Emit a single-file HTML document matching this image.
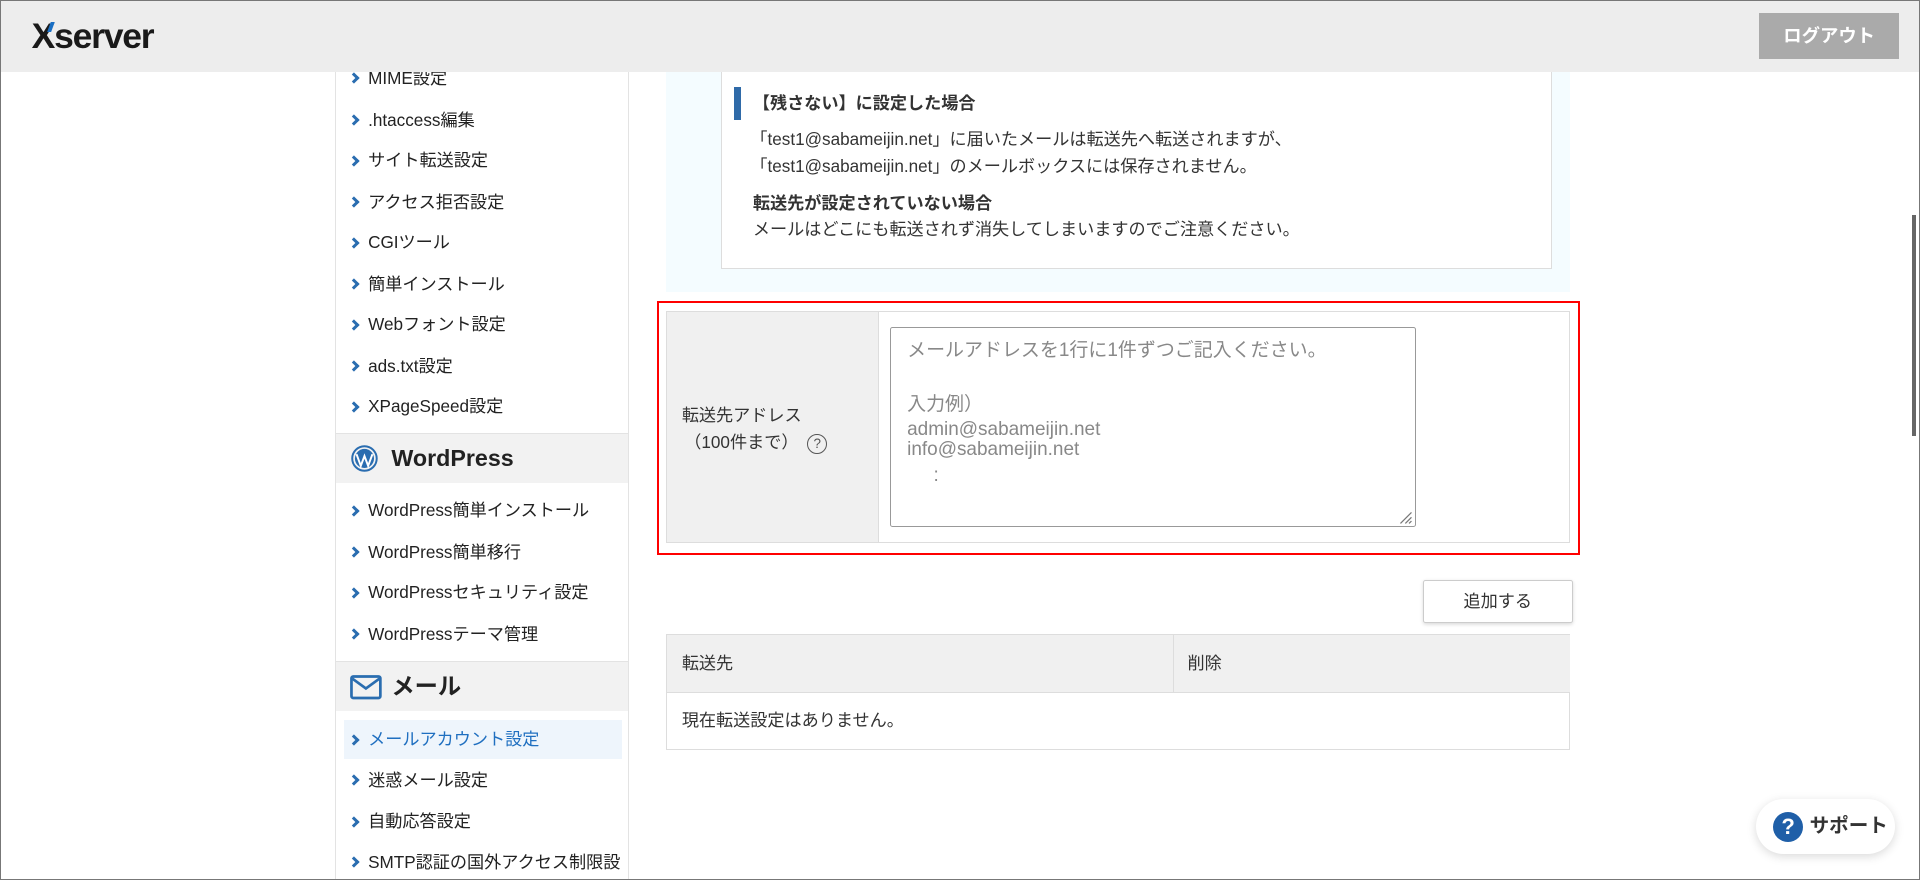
<!DOCTYPE html>
<html><head><meta charset="utf-8"><style>
html,body{margin:0;padding:0;background:#fff;overflow:hidden}
body{width:1920px;height:880px}
#w{position:relative;width:1566px;height:717px;zoom:1.22449;border:1px solid #777;overflow:hidden;font-family:"Liberation Sans","Noto Sans CJK JP",sans-serif;color:#333;font-size:14px}
.a{position:absolute;white-space:nowrap}
#hd{left:0;top:0;width:1566px;height:58px;background:#ededed;z-index:5}
.logo{left:25px;top:12px;font-size:29px;font-weight:bold;color:#1a1a1a;letter-spacing:-1px;z-index:6;line-height:34px}
.out{left:1436px;top:10px;width:114px;height:37px;background:#aaa;color:#fff;font-weight:bold;font-size:15px;text-align:center;line-height:37px;z-index:6}
#sb{left:273px;top:58px;width:238px;height:662px;border-left:1px solid #e3e3e3;border-right:1px solid #e3e3e3}
.it{left:26px;font-size:14px;color:#222;line-height:18px}
.chev{position:absolute;left:-15px;top:6px;width:4px;height:4px;border-right:2.5px solid #2a6db0;border-top:2.5px solid #2a6db0;transform:rotate(45deg)}
.sec{left:0;width:238px;height:40px;background:#f2f2f2;border-top:1px solid #e3e3e3}
.sec span{position:absolute;left:45px;top:7px;font-size:19px;font-weight:bold;color:#222;line-height:26px}
.q{display:inline-block;width:15px;height:15px;border:1px solid #555;border-radius:50%;font-size:11px;text-align:center;line-height:15px;color:#555}
.ph{left:740px;font-size:15.5px;color:#888;line-height:18px}
</style></head><body><div id="w">
<div class="a" id="hd"></div>
<div class="a logo">X<span style="position:absolute;left:14px;top:5px;width:3px;height:8px;background:#1a6fc4;transform:skewX(-20deg)"></span>server</div>
<div class="a out">ログアウト</div>
<div style="position:absolute;left:1561px;top:175px;width:3px;height:180px;background:#666"></div>

<div class="a" id="sb">
<div class="a it" style="top:-4px"><i class="chev"></i>MIME設定</div>
<div class="a it" style="top:30px"><i class="chev"></i>.htaccess編集</div>
<div class="a it" style="top:63px"><i class="chev"></i>サイト転送設定</div>
<div class="a it" style="top:97px"><i class="chev"></i>アクセス拒否設定</div>
<div class="a it" style="top:130px"><i class="chev"></i>CGIツール</div>
<div class="a it" style="top:164px"><i class="chev"></i>簡単インストール</div>
<div class="a it" style="top:197px"><i class="chev"></i>Webフォント設定</div>
<div class="a it" style="top:231px"><i class="chev"></i>ads.txt設定</div>
<div class="a it" style="top:264px"><i class="chev"></i>XPageSpeed設定</div>
<div class="a sec" style="top:295px"><svg style="position:absolute;left:12px;top:9px" width="22" height="22" viewBox="0 0 22 22"><circle cx="11" cy="11" r="10" fill="none" stroke="#2a6db0" stroke-width="1.6"/><circle cx="11" cy="11" r="7.8" fill="#2a6db0"/><path d="M4.5 7.5 L8 17 L11 9 L14 17 L17.5 7.5" fill="none" stroke="#fff" stroke-width="1.6"/></svg><span>WordPress</span></div>
<div class="a it" style="top:349px"><i class="chev"></i>WordPress簡単インストール</div>
<div class="a it" style="top:383px"><i class="chev"></i>WordPress簡単移行</div>
<div class="a it" style="top:416px"><i class="chev"></i>WordPressセキュリティ設定</div>
<div class="a it" style="top:450px"><i class="chev"></i>WordPressテーマ管理</div>
<div class="a sec" style="top:481px"><svg style="position:absolute;left:11px;top:11px" width="26" height="20" viewBox="0 0 26 20"><rect x="1.2" y="1.2" width="23.6" height="17.6" rx="1.5" fill="none" stroke="#2a6db0" stroke-width="2.2"/><path d="M2 3 L13 11 L24 3" fill="none" stroke="#2a6db0" stroke-width="2.2"/></svg><span>メール</span></div>
<div class="a" style="left:6px;top:529px;width:227px;height:32px;background:#eef5fc"></div>
<div class="a it" style="top:536px;color:#1f6fc0"><i class="chev"></i>メールアカウント設定</div>
<div class="a it" style="top:569px"><i class="chev"></i>迷惑メール設定</div>
<div class="a it" style="top:603px"><i class="chev"></i>自動応答設定</div>
<div class="a it" style="top:636px"><i class="chev"></i>SMTP認証の国外アクセス制限設</div>
</div>

<div class="a" style="left:543px;top:58px;width:738px;height:180px;background:#f4fcff"></div>
<div class="a" style="left:588px;top:50px;width:677px;height:167px;background:#fff;border:1px solid #ddd"></div>
<div class="a" style="left:599px;top:70px;width:5px;height:27px;background:#2f6aa8"></div>
<div class="a" style="left:614px;top:74px;font-weight:bold;font-size:14px;line-height:18px">【残さない】に設定した場合</div>
<div class="a" style="left:612px;top:104px;font-size:14px;line-height:18px">「test1@sabameijin.net」に届いたメールは転送先へ転送されますが、</div>
<div class="a" style="left:612px;top:126px;font-size:14px;line-height:18px">「test1@sabameijin.net」のメールボックスには保存されません。</div>
<div class="a" style="left:614px;top:156px;font-weight:bold;font-size:14px;line-height:18px">転送先が設定されていない場合</div>
<div class="a" style="left:614px;top:177px;font-size:14px;line-height:18px">メールはどこにも転送されず消失してしまいますのでご注意ください。</div>

<div class="a" style="left:536px;top:245px;width:750px;height:204px;border:2px solid #f00"></div>
<div class="a" style="left:543px;top:253px;width:737px;height:188px;border:1px solid #ddd;background:#fff"></div>
<div class="a" style="left:544px;top:254px;width:172px;height:188px;background:#f0f0f0;border-right:1px solid #ddd"></div>
<div class="a" style="left:556px;top:329px;font-size:14px;line-height:18px">転送先アドレス</div>
<div class="a" style="left:558px;top:351px;font-size:14px;line-height:18px">（100件まで）　<span class="q">?</span></div>
<div class="a" style="left:726px;top:266px;width:428px;height:162px;border:1px solid #999;border-radius:2px;background:#fff"></div>
<div class="a ph" style="top:277px">メールアドレスを1行に1件ずつご記入ください。</div>
<div class="a ph" style="top:321px">入力例）</div>
<div class="a ph" style="top:341px">admin@sabameijin.net</div>
<div class="a ph" style="top:358px">info@sabameijin.net</div>
<div class="a ph" style="top:379px">&nbsp;&nbsp;&nbsp;&nbsp;&nbsp;:</div>
<svg class="a" style="left:1141px;top:416px" width="12" height="12"><path d="M11 2 L2 11 M11 6 L6 11 M11 9 L9 11" stroke="#777" stroke-width="1"/></svg>

<div class="a" style="left:1161px;top:473px;width:121px;height:33px;border:1px solid #ccc;border-radius:2px;background:#fff;box-shadow:0 1px 3px rgba(0,0,0,.15);text-align:center;line-height:33px;font-size:14px">追加する</div>

<div class="a" style="left:543px;top:517px;width:737px;height:93px;border:1px solid #ddd"></div>
<div class="a" style="left:544px;top:518px;width:737px;height:46px;background:#f0f0f0;border-bottom:1px solid #ddd"></div>
<div class="a" style="left:957px;top:518px;width:1px;height:46px;background:#ddd"></div>
<div class="a" style="left:556px;top:532px;font-size:14px;line-height:18px">転送先</div>
<div class="a" style="left:969px;top:532px;font-size:14px;line-height:18px">削除</div>
<div class="a" style="left:556px;top:578px;font-size:14px;line-height:18px">現在転送設定はありません。</div>

<div class="a" style="left:1433px;top:652px;width:114px;height:45px;border-radius:23px;background:#fff;box-shadow:0 2px 8px rgba(0,0,0,.15)"></div>
<div class="a" style="left:1447px;top:662px;width:25px;height:25px;border-radius:50%;background:#1f5fa8;color:#fff;font-weight:bold;font-size:18px;text-align:center;line-height:25px">?</div>
<div class="a" style="left:1477px;top:664px;font-weight:bold;font-size:16px;color:#333;line-height:20px">サポート</div>
</div></body></html>
